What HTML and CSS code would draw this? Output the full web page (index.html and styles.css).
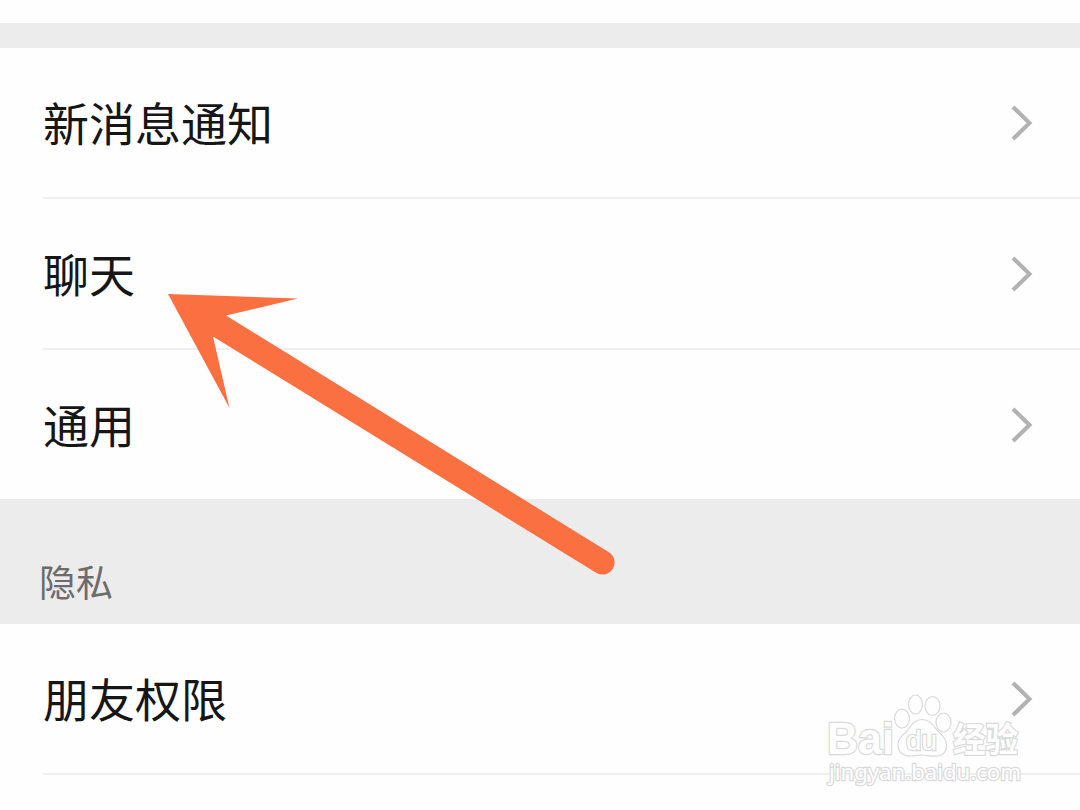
FILE: index.html
```html
<!DOCTYPE html>
<html lang="zh-CN">
<head>
    <meta charset="UTF-8">
    <meta name="viewport" content="width=device-width, initial-scale=1.0">
    <title>设置</title>
    <link rel="stylesheet" href="styles.css">
</head>
<body>
    <div class="settings">
        <div class="group-gap"></div>

        <div class="group">
            <div class="item">
                <span class="item-label">新消息通知</span>
                <svg class="chevron" viewBox="0 0 22 36"><path d="M2 2 L18.5 18 L2 34"/></svg>
            </div>
            <div class="item">
                <span class="item-label">聊天</span>
                <svg class="chevron" viewBox="0 0 22 36"><path d="M2 2 L18.5 18 L2 34"/></svg>
            </div>
            <div class="item">
                <span class="item-label">通用</span>
                <svg class="chevron" viewBox="0 0 22 36"><path d="M2 2 L18.5 18 L2 34"/></svg>
            </div>
        </div>

        <div class="group-title">隐私</div>

        <div class="group">
            <div class="item divided">
                <span class="item-label">朋友权限</span>
                <svg class="chevron" viewBox="0 0 22 36"><path d="M2 2 L18.5 18 L2 34"/></svg>
            </div>
        </div>

        <svg class="arrow" viewBox="0 0 460 290">
            <path d="M8 4 L138 8.500 L66 25.500 L448.500 262 A12 12 0 0 1 436.500 283 L53 46.500 L69.500 118 Z"/>
        </svg>

        <svg class="watermark" viewBox="0 0 260 130">
            <text class="wm-brand" x="7" y="73.500" textLength="67" lengthAdjust="spacingAndGlyphs">Bai</text>
            <g class="wm-paw">
                <ellipse cx="82" cy="38.500" rx="7.500" ry="9.500"/>
                <ellipse cx="95.500" cy="24.500" rx="7" ry="9.500"/>
                <ellipse cx="112.500" cy="26" rx="7.500" ry="9.500"/>
                <ellipse cx="123.500" cy="42.500" rx="7.500" ry="9.500"/>
                <path d="M102 39.500 C94 39.500 91 46 87 51 C83 55 78 58 78 65 C78 72 83 76.500 90 76 C95 76 98 75 102 75 C107 75 111 76.500 117 76 C124 75.500 127 70 126.500 64 C126 58 121 54 117 50 C113 45 110 39.500 102 39.500 Z"/>
            </g>
            <text class="wm-du" x="86" y="70" textLength="31" lengthAdjust="spacingAndGlyphs">du</text>
            <text class="wm-name" x="133" y="72" textLength="65" lengthAdjust="spacingAndGlyphs">经验</text>
            <text class="wm-url" x="9" y="100" textLength="192" lengthAdjust="spacingAndGlyphs">jingyan.baidu.com</text>
        </svg>
    </div>
</body>
</html>
```

FILE: styles.css
```css
* {
    margin: 0;
    padding: 0;
    box-sizing: border-box;
}

body {
    font-family: "Noto Sans CJK SC", sans-serif;
    background: #fefefe;
    color: #161616;
    overflow: hidden;
}

.settings {
    position: relative;
    height: 810px;
    padding-top: 23px;
    overflow: hidden;
}

.group-gap {
    height: 25px;
    background: #ececec;
}

.group {
    padding-left: 43px;
}

.item {
    display: flex;
    align-items: center;
    justify-content: space-between;
    height: 151px;
    padding-right: 47px;
    border-bottom: 2px solid #efefef;
}

.item:last-child {
    height: 149px;
    border-bottom: none;
}

.item.divided {
    height: 151px;
    border-bottom: 2px solid #efefef;
}

.item-label {
    font-size: 46px;
    line-height: 66px;
    padding-bottom: 3px;
}

.chevron {
    width: 22px;
    height: 36px;
    fill: none;
    stroke: #b2b2b2;
    stroke-width: 4;
}

.group-title {
    height: 125px;
    padding: 55px 0 0 39px;
    font-size: 37px;
    line-height: 54px;
    color: #6c6c6c;
    background: #ececec;
}

/* pointer drawn over the list */
.arrow {
    position: absolute;
    left: 160px;
    top: 290px;
    width: 460px;
    height: 290px;
    fill: #fb7041;
}

.watermark {
    position: absolute;
    left: 820px;
    top: 680px;
    width: 260px;
    height: 130px;
    fill: #fefefe;
    stroke: #dadada;
    stroke-width: 1.2;
}

.watermark text {
    paint-order: stroke;
    stroke-width: 2.4;
}

.wm-brand {
    font-family: "Liberation Sans", sans-serif;
    font-weight: bold;
    font-size: 44px;
}

.wm-du {
    font-family: "Liberation Sans", sans-serif;
    font-size: 27px;
}

.wm-name {
    font-family: "Noto Sans CJK SC", sans-serif;
    font-weight: bold;
    font-size: 34px;
}

.wm-url {
    font-family: "Noto Sans", sans-serif;
    font-size: 21px;
}
```
